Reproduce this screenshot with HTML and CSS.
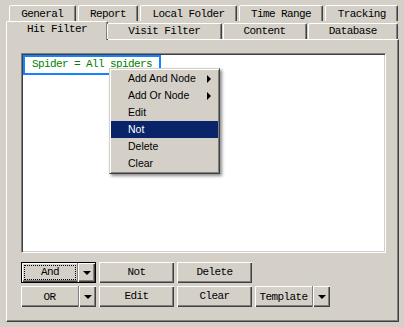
FILE: index.html
```html
<!DOCTYPE html>
<html lang="en">
<head>
    <meta charset="UTF-8">
    <title>Hit Filter</title>
    <link rel="stylesheet" href="styles.css">
</head>
<body>
    <div class="dialog">
        <div class="tab-row back">
            <div class="tab">General</div>
            <div class="tab">Report</div>
            <div class="tab">Local Folder</div>
            <div class="tab">Time Range</div>
            <div class="tab">Tracking</div>
        </div>
        <div class="tab-row front">
            <div class="tab active">Hit Filter</div>
            <div class="tab">Visit Filter</div>
            <div class="tab">Content</div>
            <div class="tab">Database</div>
        </div>
        <div class="panel">
            <div class="tree">
                <div class="node">Spider = All spiders</div>
            </div>
            <div class="buttons">
                <div class="btn-row">
                    <div class="btn split default">
                        <span class="label"><span class="focus">And</span></span>
                        <span class="drop"><i class="arrow"></i></span>
                    </div>
                    <div class="btn">Not</div>
                    <div class="btn">Delete</div>
                </div>
                <div class="btn-row">
                    <div class="btn split">
                        <span class="label">OR</span>
                        <span class="drop"><i class="arrow"></i></span>
                    </div>
                    <div class="btn">Edit</div>
                    <div class="btn">Clear</div>
                    <div class="btn split">
                        <span class="label">Template</span>
                        <span class="drop"><i class="arrow"></i></span>
                    </div>
                </div>
            </div>
        </div>
    </div>

    <div class="menu">
        <div class="item sub">Add And Node</div>
        <div class="item sub">Add Or Node</div>
        <div class="item">Edit</div>
        <div class="item selected">Not</div>
        <div class="item">Delete</div>
        <div class="item">Clear</div>
    </div>
</body>
</html>
```

FILE: styles.css
```css
* {
    margin: 0;
    padding: 0;
    box-sizing: border-box;
}

body {
    width: 404px;
    height: 327px;
    overflow: hidden;
    position: relative;
    background: #d4d0c8;
    font-family: "Liberation Mono", "DejaVu Sans Mono", monospace;
    font-size: 11px;
    letter-spacing: -0.6px;
    color: #000;
}

.dialog {
    padding: 5px 5px 5px 6px;
}

/* tabs */
.tab-row {
    display: flex;
}

.tab-row.back {
    height: 16px;
    gap: 2px;
    padding: 0 1px 0 3px;
}

.tab-row.front {
    height: 18px;
    gap: 1px;
    padding: 0 1px 0 2px;
    align-items: flex-end;
    position: relative;
    z-index: 1;
}

.tab {
    flex: 1 1 auto;
    height: 16px;
    padding: 0 11px;
    line-height: 15px;
    text-align: center;
    white-space: nowrap;
    border: 1px solid;
    border-bottom: 0;
    border-color: #fff #404040 transparent #fff;
    border-radius: 2px 2px 0 0;
    box-shadow: inset -1px 0 #808080;
    background: #d4d0c8;
}

.back .tab {
    padding-top: 2px;
    line-height: 13px;
}

.front .tab {
    padding: 0 19px;
}

.front .tab.active {
    height: 19px;
    margin: 0 -2px -1px -2px;
    padding-bottom: 3px;
}

/* page body */
.panel {
    height: 283px;
    border: 1px solid;
    border-color: #fff #404040 #404040 #fff;
    box-shadow: inset -1px -1px #808080;
    padding: 13px 0 0 14px;
}

.tree {
    width: 365px;
    height: 200px;
    background: #fff;
    border: 1px solid;
    border-color: #808080 #fff #fff #808080;
    box-shadow: inset 1px 1px #404040, inset -1px -1px #d4d0c8;
    padding: 1px;
}

.node {
    display: inline-block;
    height: 20px;
    padding: 0 7px;
    line-height: 14px;
    border: 2px solid #1683ff;
    color: #008000;
}

.buttons {
    margin-top: 9px;
    display: flex;
    flex-direction: column;
    gap: 3px;
}

.btn-row {
    display: flex;
    gap: 3px;
}

.btn {
    width: 75px;
    height: 21px;
    line-height: 20px;
    text-align: center;
    box-shadow: inset 1px 1px #fff, inset -1px -1px #404040, inset -2px -2px #808080;
}

.btn.split {
    display: flex;
}

.btn.default {
    border: 1px solid #000;
    line-height: 18px;
}

.split .label {
    flex: 1;
    display: flex;
    align-items: center;
    justify-content: center;
}

.split .drop {
    width: 18px;
    display: flex;
    align-items: center;
    justify-content: center;
    border-left: 1px solid #808080;
    box-shadow: inset 1px 0 #fff;
}

.focus {
    flex: 1;
    margin: 2px 1px 2px 2px;
    line-height: 13px;
    border: 1px dotted #000;
}

.arrow {
    display: block;
    width: 0;
    height: 0;
    margin-left: 1px;
    border-left: 4px solid transparent;
    border-right: 4px solid transparent;
    border-top: 4px solid #000;
}

/* context menu */
.menu {
    position: absolute;
    left: 109px;
    top: 68px;
    width: 111px;
    padding: 1px 0;
    background: #d4d0c8;
    border: 1px solid;
    border-color: #d4d0c8 #404040 #404040 #d4d0c8;
    box-shadow: inset 1px 1px #fff, inset -1px -1px #808080, 2px 2px 3px rgba(0, 0, 0, 0.45);
    font-family: "Liberation Sans", Arial, sans-serif;
    font-size: 10.5px;
    letter-spacing: 0;
}

.item {
    position: relative;
    height: 17px;
    line-height: 17px;
    margin: 0 1px;
    padding-left: 17px;
}

.item.selected {
    background: #0a246a;
    color: #fff;
}

.item.sub::after {
    content: "";
    position: absolute;
    right: 7px;
    top: 5px;
    border-top: 4px solid transparent;
    border-bottom: 4px solid transparent;
    border-left: 4px solid #000;
}
```
